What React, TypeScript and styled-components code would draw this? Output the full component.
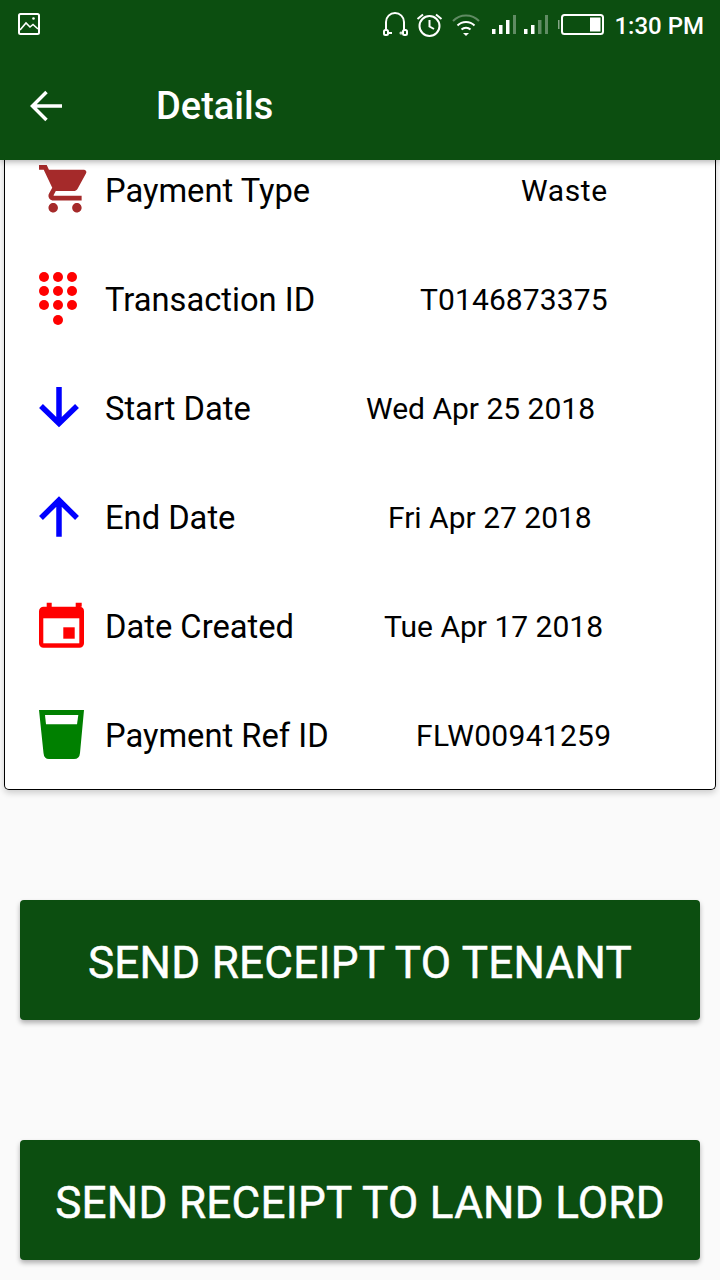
import React from "react";
import styled, { createGlobalStyle } from "styled-components";

const Global = createGlobalStyle`
  html, body { margin: 0; padding: 0; background: #fafafa; }
  * { box-sizing: border-box; }
`;

const GREEN = "#0c4e10";

const Page = styled.div`
  width: 720px;
  height: 1280px;
  overflow: hidden;
  display: flex;
  flex-direction: column;
  background: #fafafa;
  font-family: Roboto, "Liberation Sans", sans-serif;
`;

const Header = styled.header`
  position: relative;
  z-index: 2;
  height: 160px;
  flex: none;
  background: ${GREEN};
  color: #fff;
  box-shadow: 0 2px 6px rgba(0, 0, 0, 0.3);
`;

const StatusBar = styled.div`
  height: 48px;
  display: flex;
  align-items: center;
  padding: 0 16px 0 18px;
`;

const StatusRight = styled.div`
  margin-left: auto;
  display: flex;
  align-items: center;
`;

const StatusIcon = styled.svg<{ $gap: number }>`
  display: block;
  margin-right: ${(p) => p.$gap}px;
  flex: none;
`;

const Clock = styled.span`
  font-size: 24px;
  font-weight: 500;
  line-height: 48px;
  padding-top: 3px;
  white-space: nowrap;
`;

const ToolBar = styled.div`
  height: 112px;
  display: flex;
  align-items: center;
  padding: 4px 0 0 30px;
`;

const BackIcon = styled.svg`
  display: block;
  flex: none;
  margin-right: 94px;
`;

const Title = styled.h1`
  margin: 0;
  font-size: 38px;
  font-weight: 500;
`;

const Card = styled.section`
  flex: none;
  height: 630px;
  margin: 0 4px;
  display: flex;
  flex-direction: column;
  justify-content: flex-end;
  overflow: hidden;
  background: #fff;
  border: 1px solid #000;
  border-top: none;
  border-radius: 0 0 5px 5px;
  box-shadow: 0 3px 6px rgba(0, 0, 0, 0.18);
`;

const Row = styled.div`
  flex: none;
  height: 109px;
  display: flex;
  align-items: center;
  padding-left: 25px;
  color: #000;
  &:last-child {
    margin-bottom: -1px;
  }
`;

const RowIcon = styled.svg`
  display: block;
  flex: none;
  margin-right: 15px;
`;

const Label = styled.span`
  width: 241px;
  flex: none;
  font-size: 32.7px;
  white-space: nowrap;
`;

const Value = styled.span<{ $x: number; $spacing: number }>`
  margin-left: ${(p) => p.$x - 346}px;
  font-size: 30px;
  letter-spacing: ${(p) => p.$spacing}px;
  white-space: nowrap;
`;

const Actions = styled.div`
  flex: 1;
  display: flex;
  flex-direction: column;
  gap: 120px;
  padding: 110px 20px 0;
`;

const ActionButton = styled.button`
  height: 120px;
  flex: none;
  border: none;
  border-radius: 4px;
  padding: 5px 0 0;
  background: ${GREEN};
  color: #fff;
  font-family: inherit;
  font-size: 44px;
  font-weight: 400;
  letter-spacing: 0.28px;
  -webkit-text-stroke: 0.5px #fff;
  box-shadow: 0 3px 5px rgba(0, 0, 0, 0.3);
`;

const CartIcon = () => (
  <RowIcon width="60" height="60" viewBox="0 0 60 60">
    <g transform="translate(6.6 -0.74) scale(2.37)" fill="#a52a2a">
      <path d="M7 18c-1.1 0-1.99.9-1.99 2S5.9 22 7 22s2-.9 2-2-.9-2-2-2zM1 2v2h2l3.6 7.59-1.35 2.45c-.16.28-.25.61-.25.96 0 1.1.9 2 2 2h12v-2H7.42c-.14 0-.25-.11-.25-.25l.03-.12.9-1.63h7.45c.75 0 1.41-.41 1.75-1.03l3.58-6.49c.08-.14.12-.31.12-.48 0-.55-.45-1-1-1H5.21l-.94-2H1zm16 16c-1.1 0-1.99.9-1.99 2s.89 2 1.99 2 2-.9 2-2-.9-2-2-2z" />
    </g>
  </RowIcon>
);

const DialIcon = () => {
  const dots: [number, number][] = [];
  [7, 21, 35].forEach((y) => [14, 28, 42].forEach((x) => dots.push([x, y])));
  dots.push([28, 50]);
  return (
    <RowIcon width="60" height="60" viewBox="0 0 60 60">
      {dots.map(([x, y]) => (
        <circle key={`${x}-${y}`} cx={x} cy={y} r="5" fill="#f00" />
      ))}
    </RowIcon>
  );
};

const DownIcon = () => (
  <RowIcon width="60" height="60" viewBox="0 0 60 60">
    <path d="M29 8V44M11 27 29 44.500 47 27" fill="none" stroke="#00f" strokeWidth="5.500" />
  </RowIcon>
);

const UpIcon = () => (
  <RowIcon width="60" height="60" viewBox="0 0 60 60">
    <path d="M29 48.700V13M11 30 29 12.200 47 30" fill="none" stroke="#00f" strokeWidth="5.500" />
  </RowIcon>
);

const CalendarIcon = () => (
  <RowIcon width="60" height="60" viewBox="0 0 60 60">
    <path d="M16.700 5.700h5v4h24v-4h6v4h-1.500A4.500 4.500 0 0 1 54 14.200v32a4.500 4.500 0 0 1-4.500 4.500h-36A4.500 4.500 0 0 1 9 46.200v-32a4.500 4.500 0 0 1 4.500-4.500h3.200z" fill="#f00" />
    <rect x="13.300" y="21.300" width="36" height="25" fill="#fff" />
    <rect x="33.300" y="30.300" width="11.400" height="11.400" fill="#f00" />
  </RowIcon>
);

const CupIcon = () => (
  <RowIcon width="60" height="60" viewBox="0 0 60 60">
    <path d="M9 4H54L50 47Q49.500 53 44 53H19Q14 53 13.500 47z" fill="#008000" />
    <path d="M15 9H48.300L47 18.300H16z" fill="#fff" />
  </RowIcon>
);

const rows = [
  { Icon: CartIcon, label: "Payment Type", value: "Waste", x: 521, spacing: 0.6 },
  { Icon: DialIcon, label: "Transaction ID", value: "T0146873375", x: 420, spacing: 0.1 },
  { Icon: DownIcon, label: "Start Date", value: "Wed Apr 25 2018", x: 366, spacing: 0 },
  { Icon: UpIcon, label: "End Date", value: "Fri Apr 27 2018", x: 388, spacing: 0 },
  { Icon: CalendarIcon, label: "Date Created", value: "Tue Apr 17 2018", x: 384, spacing: 0 },
  { Icon: CupIcon, label: "Payment Ref ID", value: "FLW00941259", x: 416, spacing: 0.3 },
];

export default function App() {
  return (
    <Page>
      <Global />
      <Header>
        <StatusBar>
          <StatusIcon $gap={0} width="22" height="22" viewBox="0 0 22 22" fill="none" stroke="#fff">
            <rect x="1" y="1" width="20" height="20" rx="1.500" strokeWidth="2" />
            <path d="M2 17 8 10l4 4 3-2.500 5 4.500" strokeWidth="1.600" />
            <circle cx="15.500" cy="5.500" r="1.300" fill="#fff" stroke="none" />
          </StatusIcon>
          <StatusRight>
            <StatusIcon $gap={8} width="25" height="24" viewBox="0 0 25 24" fill="none" stroke="#fff" strokeWidth="2">
              <path d="M3 18V10a9 9 0 0 1 18 0v8" />
              <rect x="1" y="18" width="4" height="5" rx="1.500" />
              <rect x="20" y="18" width="4" height="5" rx="1.500" />
              <path d="M5 21h4" />
              <circle cx="18" cy="21" r="0.500" />
            </StatusIcon>
            <StatusIcon $gap={9} width="27" height="25" viewBox="0 0 27 25" fill="none" stroke="#fff" strokeWidth="2">
              <circle cx="13.500" cy="14" r="10" />
              <path d="M13.500 8v6.500l4.500 2.500M1.500 7 7 2.500M25.500 7 20 2.500" />
            </StatusIcon>
            <StatusIcon $gap={12} width="28" height="23" viewBox="0 0 28 23">
              <path d="M1 8a18 18 0 0 1 26 0" fill="none" stroke="#fff" strokeOpacity="0.35" strokeWidth="2" />
              <path d="M5.500 12.500a12 12 0 0 1 17 0M9.500 16.500a6.500 6.500 0 0 1 9 0" fill="none" stroke="#fff" strokeWidth="2" />
              <path d="M11 20h6l-3 3z" fill="#fff" />
            </StatusIcon>
            <StatusIcon $gap={8} width="24" height="19" viewBox="0 0 24 19" fill="#fff">
              <rect x="0" y="14" width="3.500" height="5" />
              <rect x="7" y="10" width="3.500" height="9" />
              <rect x="14" y="5" width="3.500" height="14" />
              <rect x="21" y="0" width="3" height="19" fillOpacity="0.35" />
            </StatusIcon>
            <StatusIcon $gap={10} width="24" height="19" viewBox="0 0 24 19" fill="#fff">
              <rect x="0" y="14" width="3.500" height="5" />
              <rect x="7" y="10" width="3.500" height="9" />
              <rect x="14" y="5" width="3.500" height="14" fillOpacity="0.35" />
              <rect x="21" y="0" width="3" height="19" fillOpacity="0.35" />
            </StatusIcon>
            <StatusIcon $gap={10} width="46" height="21" viewBox="0 0 46 21">
              <rect x="0" y="6" width="1.500" height="9" fill="#fff" fillOpacity="0.5" />
              <rect x="4" y="1" width="41" height="19" rx="2.500" fill="none" stroke="#fff" strokeWidth="2" />
              <rect x="32" y="3.500" width="10.500" height="14" fill="#fff" />
            </StatusIcon>
            <Clock>1:30 PM</Clock>
          </StatusRight>
        </StatusBar>
        <ToolBar>
          <BackIcon width="32" height="32" viewBox="0 0 32 32" fill="none" stroke="#fff" strokeWidth="3.500">
            <path d="M32 16H3M16.500 2 2.500 16l14 14" />
          </BackIcon>
          <Title>Details</Title>
        </ToolBar>
      </Header>
      <Card>
        {rows.map(({ Icon, label, value, x, spacing }) => (
          <Row key={label}>
            <Icon />
            <Label>{label}</Label>
            <Value $x={x} $spacing={spacing}>{value}</Value>
          </Row>
        ))}
      </Card>
      <Actions>
        <ActionButton>SEND RECEIPT TO TENANT</ActionButton>
        <ActionButton>SEND RECEIPT TO LAND LORD</ActionButton>
      </Actions>
    </Page>
  );
}
